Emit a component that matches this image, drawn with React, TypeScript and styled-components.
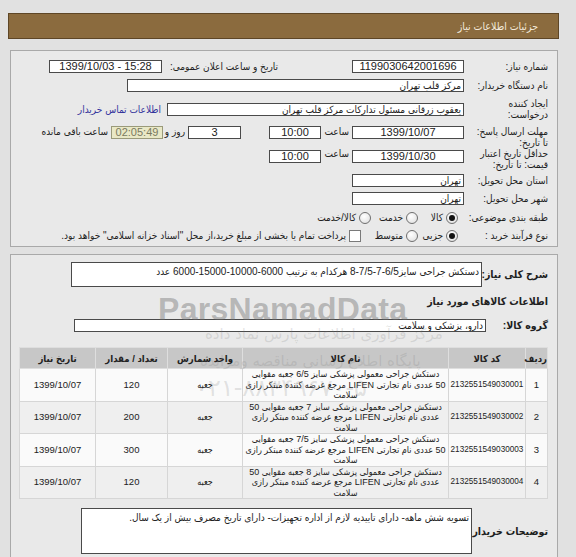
import React from "react";
import styled, { createGlobalStyle } from "styled-components";

const GlobalStyle = createGlobalStyle`
  html, body {
    margin: 0;
    padding: 0;
    background: #e1e1e1;
  }
  body {
    font-family: "Liberation Sans", "DejaVu Sans Condensed", "DejaVu Sans", sans-serif;
    font-size: 10px;
    color: #222;
  }
`;

const Page = styled.div`
  position: relative;
  direction: rtl;
  padding: 13px 17px 0 8px;
  height: 557px;
  box-sizing: border-box;
  overflow: hidden;
`;

const TitleBar = styled.div`
  height: 26px;
  box-sizing: border-box;
  background: #8b6b3e;
  border: 1px solid #5e4626;
  color: #f3eadb;
  padding-right: 20px;
  line-height: 24px;
  font-size: 10.5px;
`;

const Panel = styled.div<{ $top: number; $pb?: number }>`
  margin: ${(p) => p.$top}px 1px 0 2px;
  border: 1px solid #a9a9a9;
  background: #e9e9e9;
  padding: 9px 9px ${(p) => p.$pb ?? 0}px 0;
`;

const Row = styled.div<{ $h: number; $mt?: number; $top?: boolean }>`
  display: flex;
  align-items: ${(p) => (p.$top ? "flex-start" : "center")};
  height: ${(p) => p.$h}px;
  margin-top: ${(p) => p.$mt ?? 0}px;
`;

const Label = styled.div<{ $w?: number; $bold?: boolean }>`
  width: ${(p) => p.$w ?? 78}px;
  flex-shrink: 0;
  margin-left: 6px;
  line-height: 11px;
  font-size: ${(p) => (p.$bold ? 10.5 : 10)}px;
  font-weight: ${(p) => (p.$bold ? "bold" : "normal")};
  color: #1e1e1e;
  white-space: nowrap;
`;

const Field = styled.div<{
  $w: number;
  $h?: number;
  $s?: number;
  $mt?: number;
  $num?: boolean;
  $timer?: boolean;
  $multi?: boolean;
}>`
  width: ${(p) => p.$w}px;
  height: ${(p) => p.$h ?? 13}px;
  margin-right: ${(p) => p.$s ?? 0}px;
  margin-top: ${(p) => p.$mt ?? 0}px;
  flex-shrink: 0;
  box-sizing: border-box;
  border: 1px solid ${(p) => (p.$timer ? "#9a9a7a" : "#4a4a4a")};
  background: ${(p) => (p.$timer ? "#e9e8c6" : "#fff")};
  color: ${(p) => (p.$timer ? "#7a7a60" : "#222")};
  padding: ${(p) => (p.$multi ? "2px 2px" : "0 2px")};
  line-height: ${(p) => (p.$multi ? 13 : 11)}px;
  font-size: ${(p) => (p.$num ? 11 : 10)}px;
  text-align: ${(p) => (p.$num ? "center" : "right")};
  direction: ${(p) => (p.$num ? "ltr" : "rtl")};
  white-space: nowrap;
  overflow: hidden;
`;

const Note = styled.span<{ $s?: number; $w?: number }>`
  margin-right: ${(p) => p.$s ?? 0}px;
  width: ${(p) => (p.$w ? `${p.$w}px` : "auto")};
  flex-shrink: 0;
  font-size: 10px;
  white-space: nowrap;
`;

const Link = styled.a`
  margin-right: 6px;
  color: #34349c;
  font-size: 10px;
  text-decoration: none;
  white-space: nowrap;
`;

const Choice = styled.span<{ $s?: number; $w?: number }>`
  display: inline-flex;
  align-items: center;
  gap: 3px;
  width: ${(p) => (p.$w ? `${p.$w}px` : "auto")};
  flex-shrink: 0;
  margin-right: ${(p) => p.$s ?? 0}px;
  font-size: 10px;
  white-space: nowrap;
`;

const Radio = styled.span<{ $on?: boolean }>`
  position: relative;
  flex-shrink: 0;
  width: 12px;
  height: 12px;
  box-sizing: border-box;
  border-radius: 50%;
  border: 1px solid #6f6f6f;
  background: radial-gradient(circle at 40% 35%, #ffffff, #dcdcdc);
  &::after {
    content: "";
    display: ${(p) => (p.$on ? "block" : "none")};
    position: absolute;
    inset: 2px;
    border-radius: 50%;
    background: #111;
  }
`;

const Check = styled.span`
  flex-shrink: 0;
  width: 12px;
  height: 12px;
  box-sizing: border-box;
  border: 1px solid #7a7a7a;
  background: #fff;
`;

const Heading = styled.div<{ $mt: number }>`
  margin-top: ${(p) => p.$mt}px;
  height: 12px;
  line-height: 12px;
  font-weight: bold;
  font-size: 10.5px;
`;

const Table = styled.table`
  margin-top: 15px;
  width: 528px;
  border-collapse: collapse;
  table-layout: fixed;
  border: 1px solid #bdbdbd;
  font-size: 9px;
`;

const Th = styled.th<{ $w: number }>`
  width: ${(p) => p.$w}px;
  height: 20px;
  padding: 0;
  background: #c7c7c7;
  border: 1px solid #dedede;
  font-weight: bold;
  font-size: 9.5px;
  color: #222;
`;

const Tr = styled.tr<{ $alt: boolean }>`
  background: ${(p) => (p.$alt ? "#efefef" : "#fafafa")};
`;

const Td = styled.td<{ $num?: boolean; $small?: boolean }>`
  height: 31px;
  padding: 0 1px;
  border: 1px solid #d6d6d6;
  text-align: center;
  line-height: 10.5px;
  white-space: nowrap;
  overflow: hidden;
  font-size: ${(p) => (p.$small ? 8.2 : p.$num ? 9.5 : 9)}px;
  direction: ${(p) => (p.$num ? "ltr" : "rtl")};
`;

const Mark = styled.div`
  position: absolute;
  top: 291px;
  left: 158px;
  font-family: "Liberation Sans", sans-serif;
  font-weight: bold;
  font-size: 32px;
  letter-spacing: 0.3px;
  color: rgba(110, 110, 110, 0.42);
  direction: ltr;
  pointer-events: none;
`;

const Faint = styled.div<{ $top: number; $left: number; $size: number }>`
  position: absolute;
  top: ${(p) => p.$top}px;
  left: ${(p) => p.$left}px;
  font-family: "DejaVu Sans", sans-serif;
  font-size: ${(p) => p.$size}px;
  color: rgba(120, 120, 120, 0.2);
  white-space: nowrap;
  pointer-events: none;
`;

const columns = [
  { title: "ردیف", w: 21 },
  { title: "کد کالا", w: 76 },
  { title: "نام کالا", w: 205 },
  { title: "واحد شمارش", w: 74 },
  { title: "تعداد / مقدار", w: 71 },
  { title: "تاریخ نیاز", w: 75 },
];

const items = [
  {
    code: "2132551549030001",
    name: [
      "دستکش جراحی معمولی پزشکی سایز 6/5 جعبه مقوایی",
      "50 عددی نام تجارتی LIFEN مرجع عرضه کننده مبتکر رازی",
      "سلامت",
    ],
    qty: "120",
  },
  {
    code: "2132551549030002",
    name: [
      "دستکش جراحی معمولی پزشکی سایز 7 جعبه مقوایی 50",
      "عددی نام تجارتی LIFEN مرجع عرضه کننده مبتکر رازی",
      "سلامت",
    ],
    qty: "200",
  },
  {
    code: "2132551549030003",
    name: [
      "دستکش جراحی معمولی پزشکی سایز 7/5 جعبه مقوایی",
      "50 عددی نام تجارتی LIFEN مرجع عرضه کننده مبتکر رازی",
      "سلامت",
    ],
    qty: "300",
  },
  {
    code: "2132551549030004",
    name: [
      "دستکش جراحی معمولی پزشکی سایز 8 جعبه مقوایی 50",
      "عددی نام تجارتی LIFEN مرجع عرضه کننده مبتکر رازی",
      "سلامت",
    ],
    qty: "120",
  },
];

export default function App() {
  return (
    <Page>
      <GlobalStyle />
      <TitleBar>جزئیات اطلاعات نیاز</TitleBar>

      <Panel $top={11} $pb={4}>
        <Row $h={13}>
          <Label>شماره نیاز:</Label>
          <Field $w={112} $num>
            1199030642001696
          </Field>
          <Note $s={74} $w={113}>
            تاریخ و ساعت اعلان عمومی:
          </Note>
          <Field $w={113} $s={3} $num>
            1399/10/03 - 15:28
          </Field>
        </Row>
        <Row $h={13} $mt={6}>
          <Label>نام دستگاه خریدار:</Label>
          <Field $w={337}>مرکز قلب تهران</Field>
        </Row>
        <Row $h={24} $mt={5}>
          <Label>
            ایجاد کننده
            <br />
            درخواست:
          </Label>
          <Field $w={297}>یعقوب زرقانی مسئول تدارکات مرکز قلب تهران</Field>
          <Link href="#">اطلاعات تماس خریدار</Link>
        </Row>
        <Row $h={22} $mt={5} $top>
          <Label>
            مهلت ارسال پاسخ:
            <br />
            تا تاریخ:
          </Label>
          <Field $w={112} $num>
            1399/10/07
          </Field>
          <Note $s={3} $w={28}>
            ساعت
          </Note>
          <Field $w={52} $num>
            10:00
          </Field>
          <Field $w={53} $s={28} $num>
            3
          </Field>
          <Note $s={3} $w={20}>
            روز و
          </Note>
          <Field $w={52} $s={2} $num $timer>
            02:05:49
          </Field>
          <Note $s={3}>ساعت باقی مانده</Note>
        </Row>
        <Row $h={22} $mt={0} $top>
          <Label>
            حداقل تاریخ اعتبار
            <br />
            قیمت: تا تاریخ:
          </Label>
          <Field $w={112} $mt={2} $num>
            1399/10/30
          </Field>
          <Note $s={3} $w={28}>
            ساعت
          </Note>
          <Field $w={52} $mt={2} $num>
            10:00
          </Field>
        </Row>
        <Row $h={13} $mt={4}>
          <Label>استان محل تحویل:</Label>
          <Field $w={112}>تهران</Field>
        </Row>
        <Row $h={13} $mt={5}>
          <Label>شهر محل تحویل:</Label>
          <Field $w={112}>تهران</Field>
        </Row>
        <Row $h={13} $mt={6}>
          <Label>طبقه بندی موضوعی:</Label>
          <Choice $s={6} $w={33}>
            <Radio $on />
            کالا
          </Choice>
          <Choice $s={7} $w={38}>
            <Radio />
            خدمت
          </Choice>
          <Choice $s={9}>
            <Radio />
            کالا/خدمت
          </Choice>
        </Row>
        <Row $h={13} $mt={5}>
          <Label>نوع فرآیند خرید :</Label>
          <Choice $s={6} $w={33}>
            <Radio $on />
            جزیی
          </Choice>
          <Choice $s={7} $w={38}>
            <Radio />
            متوسط
          </Choice>
          <Choice $s={19}>
            <Check />
            پرداخت تمام یا بخشی از مبلغ خرید،از محل "اسناد خزانه اسلامی" خواهد بود.
          </Choice>
        </Row>
      </Panel>

      <Panel $top={7} $pb={6}>
        <Row $h={24} $mt={-2}>
          <Label $w={60} $bold>
            شرح کلی نیاز:
          </Label>
          <Field $w={411} $h={25} $multi>
            دستکش جراحی سایز6/5-7-7/5-8 هرکدام به ترتیب 6000-10000-15000-6000 عدد
          </Field>
        </Row>
        <Heading $mt={9}>اطلاعات کالاهای مورد نیاز</Heading>
        <Row $h={13} $mt={12}>
          <Label $w={56} $bold>
            گروه کالا:
          </Label>
          <Field $w={412}>دارو، پزشکی و سلامت</Field>
        </Row>

        <Table>
          <thead>
            <tr>
              {columns.map((c) => (
                <Th key={c.title} $w={c.w}>
                  {c.title}
                </Th>
              ))}
            </tr>
          </thead>
          <tbody>
            {items.map((it, i) => (
              <Tr key={it.code} $alt={i % 2 === 1}>
                <Td $num>{i + 1}</Td>
                <Td $num $small>
                  {it.code}
                </Td>
                <Td>
                  {it.name.map((line, k) => (
                    <React.Fragment key={k}>
                      {k > 0 && <br />}
                      {line}
                    </React.Fragment>
                  ))}
                </Td>
                <Td>جعبه</Td>
                <Td $num>{it.qty}</Td>
                <Td $num>1399/10/07</Td>
              </Tr>
            ))}
          </tbody>
        </Table>

        <Row $h={46} $mt={9}>
          <Label $w={70} $bold>
            توضیحات خریدار:
          </Label>
          <Field $w={391} $h={46} $multi>
            تسویه شش ماهه- دارای تاییدیه لازم از اداره تجهیزات- دارای تاریخ مصرف بیش از یک سال.
          </Field>
        </Row>
      </Panel>

      <Mark>ParsNamadData</Mark>
      <Faint $top={325} $left={205} $size={15}>
        مرکز فرآوری اطلاعات پارس نماد داده
      </Faint>
      <Faint $top={352} $left={200} $size={15}>
        پایگاه اطلاع رسانی مناقصه ومزایده
      </Faint>
      <Faint $top={374} $left={195} $size={24}>
        ۰۲۱-۸۸۳۴۹۶۷۰-۵
      </Faint>
    </Page>
  );
}
